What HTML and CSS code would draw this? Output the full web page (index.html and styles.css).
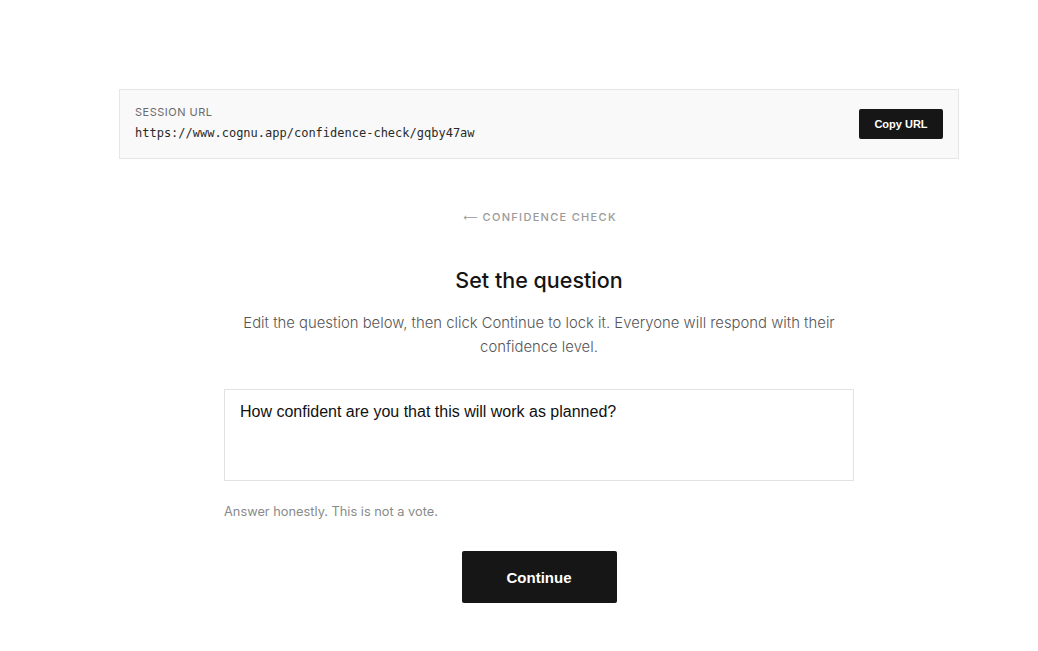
FILE: index.html
```html
<!DOCTYPE html>
<html lang="en">
<head>
<meta charset="utf-8">
<title>Confidence Check</title>
<link rel="stylesheet" href="styles.css">
</head>
<body>
<main class="page">
  <section class="session">
    <div class="session-info">
      <div class="session-label">SESSION URL</div>
      <div class="session-url">https://www.cognu.app/confidence-check/gqby47aw</div>
    </div>
    <button class="copy-btn">Copy URL</button>
  </section>

  <a class="back" href="#"><span class="arrow">&#10229;</span> CONFIDENCE CHECK</a>

  <h1 class="title">Set the question</h1>
  <p class="lead">Edit the question below, then click Continue to lock it. Everyone will respond with their confidence level.</p>

  <div class="form">
    <textarea class="question">How confident are you that this will work as planned?</textarea>
    <p class="hint">Answer honestly. This is not a vote.</p>
    <button class="continue">Continue</button>
  </div>
</main>
</body>
</html>
```
FILE: styles.css
```css
* { box-sizing: border-box; }
html, body { margin: 0; padding: 0; background: #fff; }
body { font-family: Inter, "Liberation Sans", sans-serif; color: #111; }

.page {
  width: 840px;
  margin: 89px 0 0 119px;
  display: flex;
  flex-direction: column;
  align-items: center;
}

.session {
  width: 100%;
  height: 70px;
  background: #f9f9f9;
  border: 1px solid #e6e6e6;
  display: flex;
  align-items: center;
  justify-content: space-between;
  padding: 0 15px 0 15px;
}
.session-info { display: flex; flex-direction: column; gap: 7px; padding-bottom: 3px; }
.session-label {
  font-size: 11px;
  letter-spacing: 0.5px;
  color: #6b6b6b;
  font-weight: 400;
  line-height: 13px;
}
.session-url {
  font-family: "DejaVu Sans Mono", "Liberation Mono", monospace;
  font-size: 12px;
  line-height: 14px;
  color: #2a2a2a;
}
.copy-btn {
  width: 84px;
  height: 30px;
  background: #161616;
  color: #fff;
  border: none;
  border-radius: 2px;
  font-family: "Liberation Sans", Arial, sans-serif;
  font-weight: bold;
  font-size: 11px;
  padding: 0;
  margin-bottom: 1px;
}

.back {
  margin-top: 51px;
  margin-left: 2px;
  font-size: 11px;
  font-weight: 500;
  letter-spacing: 1.3px;
  color: #9a9a9a;
  text-decoration: none;
  display: flex;
  align-items: center;
  gap: 5px;
}
.arrow {
  font-family: "DejaVu Sans", sans-serif;
  font-size: 10px;
  letter-spacing: 0;
  line-height: 13px;
}

.title {
  margin: 41px 0 0;
  font-size: 21.5px;
  font-weight: 500;
  color: #141414;
  line-height: 30px;
}

.lead {
  margin: 16px 0 0;
  width: 600px;
  text-align: center;
  font-size: 14.85px;
  font-weight: 300;
  line-height: 24px;
  color: #555;
}

.form {
  width: 630px;
  margin-top: 30px;
  display: flex;
  flex-direction: column;
  align-items: center;
}
.question {
  width: 100%;
  height: 92px;
  border: 1px solid #e2e2e2;
  border-radius: 0;
  padding: 12px 15px;
  font-family: "Liberation Sans", Arial, sans-serif;
  font-size: 16px;
  line-height: 20px;
  color: #111;
  resize: none;
  outline: none;
}
.hint {
  align-self: flex-start;
  margin: 23px 0 0;
  font-size: 12.8px;
  color: #8a8a8a;
  font-weight: 400;
}
.continue {
  margin-top: 32px;
  width: 155px;
  height: 52px;
  background: #161616;
  color: #fff;
  border: none;
  border-radius: 2px;
  font-family: "Liberation Sans", Arial, sans-serif;
  font-weight: bold;
  font-size: 15px;
}
```
